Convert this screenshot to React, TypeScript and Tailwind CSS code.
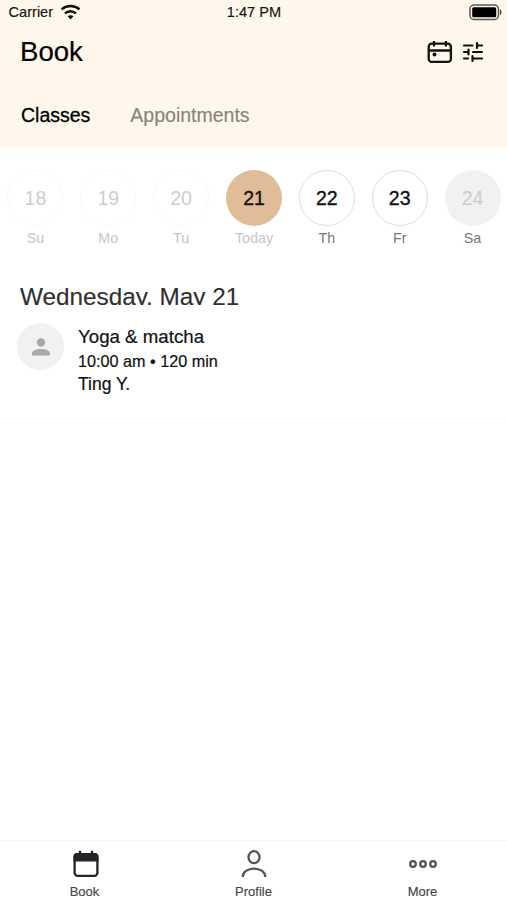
const days = [
  { n: "18", label: "Su", circle: "border border-[#fafafa] text-[#cdcdcd]", text: "text-[#c6c6c6]" },
  { n: "19", label: "Mo", circle: "border border-[#fafafa] text-[#cdcdcd]", text: "text-[#c6c6c6]" },
  { n: "20", label: "Tu", circle: "border border-[#fafafa] text-[#cdcdcd]", text: "text-[#c6c6c6]" },
  { n: "21", label: "Today", circle: "bg-[#e0bd98] text-[#17110c] [-webkit-text-stroke:0.35px]", text: "text-[#c6c6c6]" },
  { n: "22", label: "Th", circle: "border border-[#dedede] text-[#111] [-webkit-text-stroke:0.35px]", text: "text-[#777]" },
  { n: "23", label: "Fr", circle: "border border-[#dedede] text-[#111] [-webkit-text-stroke:0.35px]", text: "text-[#777]" },
  { n: "24", label: "Sa", circle: "bg-[#f1f1f1] text-[#cbcbcb]", text: "text-[#777]" },
];

function WifiIcon() {
  return (
    <svg className="ml-[7px] h-[16px] w-[21px]" viewBox="0 0 22 16" preserveAspectRatio="none" fill="none" stroke="#0c0b09" strokeWidth="2.5">
      <path d="M1.6 5.4C7 .9 15 .9 20.4 5.4" />
      <path d="M5.2 9.4c3.4-3 8.200-3 11.600 0" />
      <path d="M11 15.500l-3.100-3.200c1.700-1.500 4.500-1.500 6.200 0z" fill="#0c0b09" stroke="none" />
    </svg>
  );
}

function BatteryIcon() {
  return (
    <svg className="h-[17px] w-[34px]" viewBox="0 0 34 17">
      <rect x="1" y="1" width="28.500" height="14.500" rx="4" fill="none" stroke="#5b5753" strokeWidth="1.500" />
      <rect x="3.200" y="3.200" width="24" height="10" rx="1.500" fill="#000" />
      <path d="M31 5.500c2 .5 2 5 0 5.500z" fill="#4a4744" />
    </svg>
  );
}

function CalendarIcon() {
  return (
    <svg className="h-[24px] w-[26px]" viewBox="0 0 26 24" fill="none" stroke="#15120f" strokeWidth="2.300">
      <rect x="1.700" y="3.700" width="22.200" height="18.200" rx="3" />
      <path d="M2 10.500h22M7 1v5.500M18.900 1v5.500" />
      <circle cx="7.500" cy="14.500" r="2" fill="#15120f" stroke="none" />
    </svg>
  );
}

function FilterIcon() {
  return (
    <svg className="h-[22px] w-[22px]" viewBox="0 0 22 22" fill="none" stroke="#15120f" strokeWidth="2.200" strokeLinecap="round">
      <path d="M2 4.500h8.500M15 4.500h5M15 2v5M2 11h4M6.500 8.500v5M11 11h9M2 17.500h4M10.500 17.500H20M10.500 15v5" />
    </svg>
  );
}

function BookIcon() {
  return (
    <svg className="h-[28px] w-[28px] translate-x-px" viewBox="0 0 28 28">
      <rect x="2.600" y="4.200" width="22.800" height="21.600" rx="3" fill="none" stroke="#222427" strokeWidth="2.300" />
      <path d="M1.500 6.500A3.500 3.500 0 0 1 5 3h18a3.500 3.500 0 0 1 3.500 3.500v5h-25z" fill="#222427" />
      <path d="M8 .8v4M20 .8v4" stroke="#222427" strokeWidth="2.400" />
    </svg>
  );
}

function ProfileIcon() {
  return (
    <svg className="h-[28px] w-[28px]" viewBox="0 0 28 28" fill="none" stroke="#555" strokeWidth="2.300">
      <ellipse cx="14" cy="7.200" rx="5.500" ry="6" />
      <path d="M2.700 27c0-5 5-8.400 11.300-8.400S25.300 22 25.300 27" />
    </svg>
  );
}

function MoreIcon() {
  return (
    <svg className="h-[28px] w-[28px]" viewBox="0 0 28 28" fill="none" stroke="#555" strokeWidth="2.300">
      <circle cx="4" cy="14" r="2.800" />
      <circle cx="14" cy="14" r="2.800" />
      <circle cx="24" cy="14" r="2.800" />
    </svg>
  );
}

const nav = [
  { label: "Book", Icon: BookIcon },
  { label: "Profile", Icon: ProfileIcon },
  { label: "More", Icon: MoreIcon },
];

export default function App() {
  return (
    <div className="flex h-[900px] w-[507px] flex-col overflow-hidden bg-white font-['Liberation_Sans',Arial,sans-serif] text-black">
      <header className="flex h-[147px] flex-col bg-[#fff6ec]">
        <div className="grid h-[24px] grid-cols-3 items-center text-[14.600px] leading-[24px] text-[#151310] [-webkit-text-stroke:0.150px]">
          <div className="flex items-center pl-[8.500px]">
            <span>Carrier</span>
            <WifiIcon />
          </div>
          <span className="pl-px text-center">1:47 PM</span>
          <div className="flex justify-end pr-[4px]">
            <BatteryIcon />
          </div>
        </div>
        <div className="flex h-[56px] items-center justify-between pr-[23px] pl-[20px]">
          <h1 className="text-[27.600px] leading-[56px] [-webkit-text-stroke:0.200px]">Book</h1>
          <div className="flex items-center gap-[9px]">
            <CalendarIcon />
            <FilterIcon />
          </div>
        </div>
        <nav className="flex h-[67px] gap-[40px] pl-[21px] text-[19.500px] leading-[71px]">
          <span className="[-webkit-text-stroke:0.3px]">Classes</span>
          <span className="text-[#89847e] [-webkit-text-stroke:0.150px]">Appointments</span>
        </nav>
      </header>

      <section className="-ml-px grid w-[510px] shrink-0 grid-cols-7 pt-[23px]">
        {days.map((d) => (
          <div key={d.n} className="flex flex-col items-center">
            <div className={`flex size-[56px] items-center justify-center rounded-full pt-px text-[19.500px] ${d.circle}`}>{d.n}</div>
            <span className={`mt-[3px] text-[14.300px] leading-[19px] ${d.text}`}>{d.label}</span>
          </div>
        ))}
      </section>

      <main className="flex-1">
        <h2 className="mt-[34px] ml-[20px] h-[23px] overflow-hidden text-[24.300px] leading-[29px] text-[#303030] [-webkit-text-stroke:0.150px]">Wednesday, May 21</h2>
        <article className="flex h-[114px] border-b border-[#f9f9f9] pl-[17px]">
          <div className="mt-[18px] flex size-[47px] items-center justify-center rounded-full bg-[#f1f1f1]">
            <svg className="size-[18px]" viewBox="0 0 18 18" fill="#a9a9a9">
              <circle cx="9" cy="4.500" r="4.200" />
              <path d="M0 17.500v-2.200C0 12.500 5 11 9 11s9 1.500 9 4.300v2.200z" />
            </svg>
          </div>
          <div className="mt-[20px] ml-[14px] flex flex-col text-[#111] [-webkit-text-stroke:0.200px]">
            <span className="text-[18.700px] leading-[24px]">Yoga &amp; matcha</span>
            <span className="text-[16.200px] leading-[24px]">10:00 am • 120 min</span>
            <span className="text-[17.500px] leading-[22px]">Ting Y.</span>
          </div>
        </article>
      </main>

      <footer className="grid h-[60px] shrink-0 grid-cols-3 border-t border-[#f3f3f3] text-[#444] [-webkit-text-stroke:0.150px]">
        {nav.map(({ label, Icon }) => (
          <div key={label} className="flex flex-col items-center pt-[9px]">
            <Icon />
            <span className="mt-[5px] text-[13px] leading-[18px]">{label}</span>
          </div>
        ))}
      </footer>
    </div>
  );
}
